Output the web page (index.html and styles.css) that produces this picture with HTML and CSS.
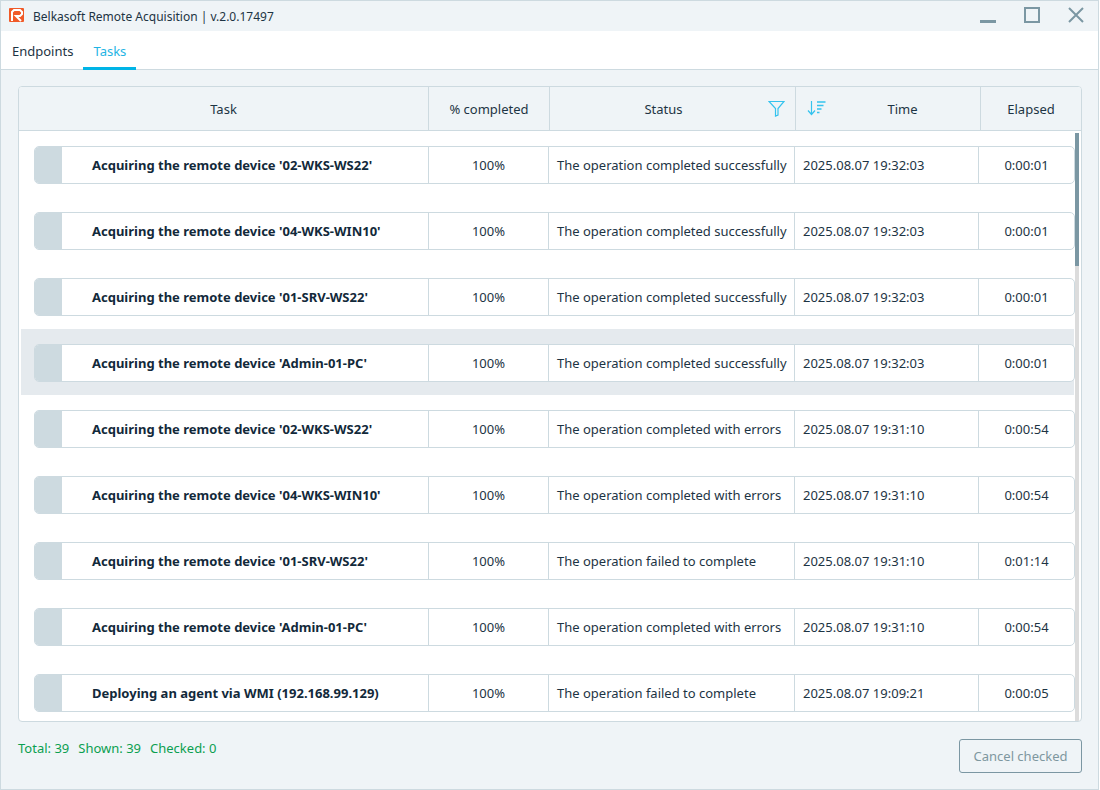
FILE: index.html
```html
<!DOCTYPE html>
<html lang="en">
<head>
<meta charset="utf-8">
<title>Belkasoft Remote Acquisition</title>
<link rel="stylesheet" href="styles.css">
</head>
<body>
<div class="window">
  <header class="titlebar">
    <svg class="logo" width="15" height="14" viewBox="0 0 15 14"><rect width="15" height="14" rx="1" fill="#f05a28"/><path d="M3 13 V4 L5 2 H11 L13 4 V6 L11 8 H7 L12 13" fill="none" stroke="#fff" stroke-width="2"/></svg>
    <span class="apptitle">Belkasoft Remote Acquisition | v.2.0.17497</span>
    <div class="winctl">
      <svg width="16" height="16" viewBox="0 0 16 16"><path d="M0 14.5H16" stroke="#7b97a3" stroke-width="3"/></svg>
      <svg width="16" height="16" viewBox="0 0 16 16"><rect x="1" y="1" width="14" height="14" fill="none" stroke="#7b97a3" stroke-width="2"/></svg>
      <svg width="16" height="16" viewBox="0 0 16 16"><path d="M1 1L15 15M15 1L1 15" stroke="#7b97a3" stroke-width="2"/></svg>
    </div>
  </header>
  <nav class="tabs">
    <span class="tab">Endpoints</span>
    <span class="tab active">Tasks</span>
  </nav>
  <main class="content">
    <section class="table">
      <div class="thead">
        <div class="th">Task</div>
        <div class="th">% completed</div>
        <div class="th status"><span>Status</span>
          <svg class="filter" width="17" height="17" viewBox="0 0 17 17"><path d="M1 1.5H16L10 8.5V15L7.5 16V8.5Z" fill="none" stroke="#35c3ee" stroke-width="1.2"/></svg>
        </div>
        <div class="th time">
          <svg class="sort" width="19" height="16" viewBox="0 0 19 16"><path d="M4.5 1V14M1 10.5L4.5 14.5L8 10.5" fill="none" stroke="#35c3ee" stroke-width="1.2"/><path d="M10 2H18.500M10 5.500H16.500M10 9H14.500M10 12.500H12.500" stroke="#35c3ee" stroke-width="1.300"/></svg>
          <span>Time</span>
        </div>
        <div class="th last">Elapsed</div>
      </div>
      <div class="tbody">
        <div class="rows">
          <div class="row"><div class="cells"><div class="mark"></div><div class="c task">Acquiring the remote device '02-WKS-WS22'</div><div class="c pct">100%</div><div class="c stat">The operation completed successfully</div><div class="c tm">2025.08.07 19:32:03</div><div class="c el">0:00:01</div></div></div>
          <div class="row"><div class="cells"><div class="mark"></div><div class="c task">Acquiring the remote device '04-WKS-WIN10'</div><div class="c pct">100%</div><div class="c stat">The operation completed successfully</div><div class="c tm">2025.08.07 19:32:03</div><div class="c el">0:00:01</div></div></div>
          <div class="row"><div class="cells"><div class="mark"></div><div class="c task">Acquiring the remote device '01-SRV-WS22'</div><div class="c pct">100%</div><div class="c stat">The operation completed successfully</div><div class="c tm">2025.08.07 19:32:03</div><div class="c el">0:00:01</div></div></div>
          <div class="row hover"><div class="cells"><div class="mark"></div><div class="c task">Acquiring the remote device 'Admin-01-PC'</div><div class="c pct">100%</div><div class="c stat">The operation completed successfully</div><div class="c tm">2025.08.07 19:32:03</div><div class="c el">0:00:01</div></div></div>
          <div class="row"><div class="cells"><div class="mark"></div><div class="c task">Acquiring the remote device '02-WKS-WS22'</div><div class="c pct">100%</div><div class="c stat">The operation completed with errors</div><div class="c tm">2025.08.07 19:31:10</div><div class="c el">0:00:54</div></div></div>
          <div class="row"><div class="cells"><div class="mark"></div><div class="c task">Acquiring the remote device '04-WKS-WIN10'</div><div class="c pct">100%</div><div class="c stat">The operation completed with errors</div><div class="c tm">2025.08.07 19:31:10</div><div class="c el">0:00:54</div></div></div>
          <div class="row"><div class="cells"><div class="mark"></div><div class="c task">Acquiring the remote device '01-SRV-WS22'</div><div class="c pct">100%</div><div class="c stat">The operation failed to complete</div><div class="c tm">2025.08.07 19:31:10</div><div class="c el">0:01:14</div></div></div>
          <div class="row"><div class="cells"><div class="mark"></div><div class="c task">Acquiring the remote device 'Admin-01-PC'</div><div class="c pct">100%</div><div class="c stat">The operation completed with errors</div><div class="c tm">2025.08.07 19:31:10</div><div class="c el">0:00:54</div></div></div>
          <div class="row"><div class="cells"><div class="mark"></div><div class="c task">Deploying an agent via WMI (192.168.99.129)</div><div class="c pct">100%</div><div class="c stat">The operation failed to complete</div><div class="c tm">2025.08.07 19:09:21</div><div class="c el">0:00:05</div></div></div>
        </div>
        <div class="scrollbar"><div class="thumb"></div></div>
      </div>
    </section>
    <footer class="footer">
      <div class="counts"><span>Total: 39</span><span>Shown: 39</span><span>Checked: 0</span></div>
      <button class="btn" disabled>Cancel checked</button>
    </footer>
  </main>
</div>
</body>
</html>
```

FILE: styles.css
```css
* { box-sizing: border-box; }
html, body { margin: 0; padding: 0; background: #fff; }
body { font-family: "Noto Sans", "Open Sans", sans-serif; font-size: 13px; color: #1d3444; width: 1100px; height: 790px; overflow: hidden; }
.window { width: 1099px; height: 790px; border: 1px solid #cddae0; display: flex; flex-direction: column; background: #eff4f7; }
.titlebar { height: 30px; flex: none; display: flex; align-items: center; padding-left: 8px; background: #eff4f7; }
.logo { display: block; margin-right: 9px; margin-top: -2px; }
.apptitle { font-size: 12px; color: #1d3444; }
.winctl { margin-left: auto; display: flex; gap: 28px; padding-right: 14px; margin-top: -3px; }
.winctl svg { display: block; }
.tabs { height: 39px; flex: none; display: flex; background: #fff; border-bottom: 1px solid #cddae0; padding-left: 1px; }
.tab { height: 39px; padding: 11px 10px 0; color: #1d3444; line-height: 19px; }
.tab.active { color: #1fb4e4; border-bottom: 3px solid #00b4e6; }
.content { flex: 1; min-height: 0; padding: 16px 16px 0 17px; display: flex; flex-direction: column; }
.table { height: 636px; flex: none; border: 1px solid #cddae0; border-radius: 4px; background: #fff; display: flex; flex-direction: column; overflow: hidden; }
.thead { height: 44px; flex: none; display: grid; grid-template-columns: 410px 121px 246px 185px 1fr; background: #eff4f7; border-bottom: 1px solid #cddae0; }
.th { display: flex; align-items: center; justify-content: center; border-right: 1px solid #cddae0; font-size: 13px; position: relative; }
.th.last { border-right: 0; }
.th.status span { margin-right: 18px; }
.filter { position: absolute; right: 10px; top: 13px; }
.sort { position: absolute; left: 11px; top: 13px; }
.th.time span { margin-left: 29px; }
.tbody { flex: 1; min-height: 0; display: flex; position: relative; overflow: hidden; }
.rows { flex: 1; min-width: 0; padding: 0 7px 0 2px; }
.row { height: 66px; padding: 15px 0 0 13px; flex: none; }
.row:first-child { margin-top: 0; }
.row.hover { background: #e5eaee; }
.cells { height: 38px; display: grid; grid-template-columns: 27px 367px 120px 246px 184px 1fr; border: 1px solid #cddae0; border-radius: 5px; background: #fff; align-items: stretch; overflow: hidden; margin-right: -1px; }
.mark { background: #cddae0; margin: -1px 0; }
.c { display: flex; align-items: center; border-right: 1px solid #cddae0; white-space: nowrap; }
.c:last-child { border-right: 0; }
.task { font-weight: 700; padding-left: 30px; color: #12293a; letter-spacing: 0; }
.pct, .el { justify-content: center; }
.stat, .tm { padding-left: 8px; }
.scrollbar { position: absolute; right: 2px; top: 2px; bottom: 0; width: 4px; background: #dcdcdc; }
.thumb { height: 133px; background: #7b97a3; }
.footer { flex: 1; display: flex; justify-content: space-between; align-items: flex-start; }
.counts { display: flex; gap: 9px; color: #0b9f50; font-size: 13px; margin-top: 17px; line-height: 18px; }
.btn { margin-top: 17px; width: 123px; height: 34px; border: 1px solid #7b97a3; border-radius: 3px; background: transparent; color: #7e979f; font: 13px "Noto Sans", "Open Sans", sans-serif; padding: 0; }
```
